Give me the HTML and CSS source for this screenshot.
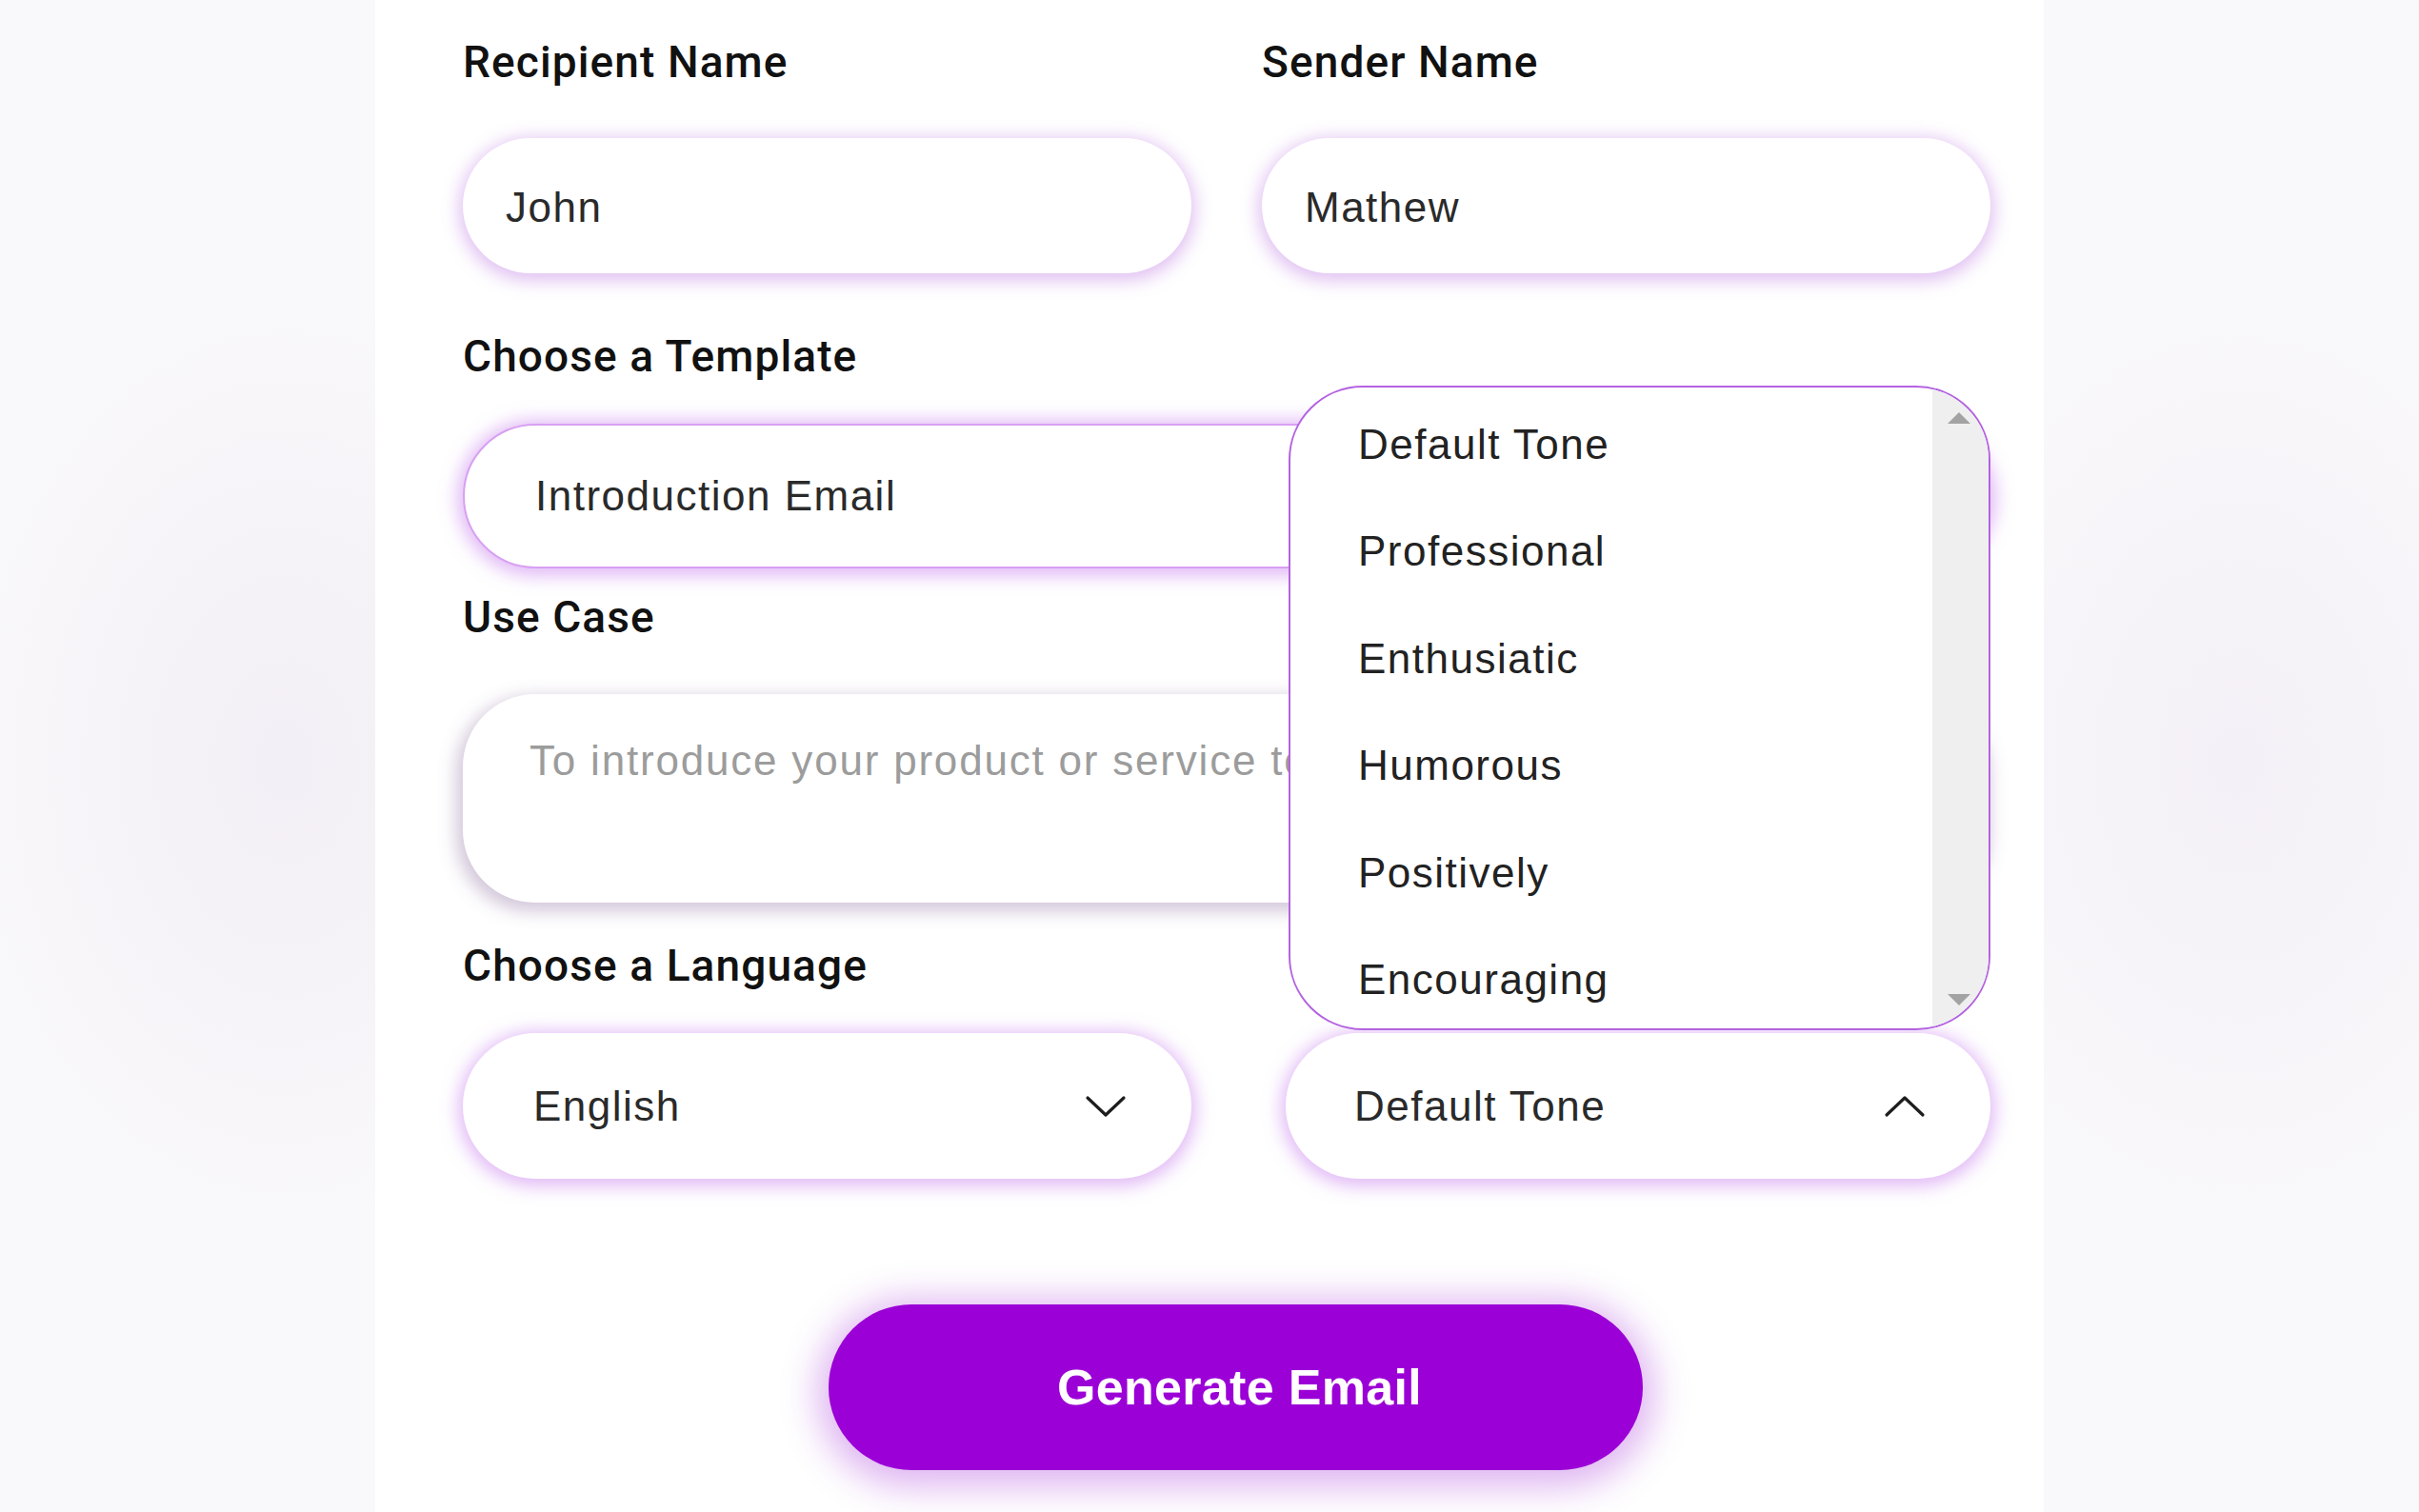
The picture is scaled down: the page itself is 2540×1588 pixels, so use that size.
FILE: index.html
```html
<!DOCTYPE html>
<html lang="en">
<head>
<meta charset="utf-8">
<title>Email Generator</title>
<link rel="stylesheet" href="styles.css">
</head>
<body>
<div class="page">
  <main class="card">
    <div class="row-two">
      <div class="field">
        <div class="label">Recipient Name</div>
        <div class="pill text-input">John</div>
      </div>
      <div class="field">
        <div class="label">Sender Name</div>
        <div class="pill text-input">Mathew</div>
      </div>
    </div>

    <div class="field field-template">
      <div class="label">Choose a Template</div>
      <div class="pill select template-select"><span>Introduction Email</span></div>
    </div>

    <div class="field field-usecase">
      <div class="label">Use Case</div>
      <div class="textarea"><span class="placeholder">To introduce your product or service to a potential customer</span></div>
    </div>

    <div class="row-lang">
      <div class="field">
        <div class="label">Choose a Language</div>
        <div class="pill select lang-select">
          <span>English</span>
          <svg class="chev" viewBox="0 0 44 24" width="44" height="24"><polyline points="3,3 22,21 41,3" fill="none" stroke="#1d1d1d" stroke-width="3.2" stroke-linecap="round" stroke-linejoin="round"/></svg>
        </div>
      </div>
      <div class="field tone-field">
        <div class="tone-wrap">
          <div class="pill select tone-select">
            <span>Default Tone</span>
            <svg class="chev" viewBox="0 0 44 24" width="44" height="24"><polyline points="3,21 22,3 41,21" fill="none" stroke="#1d1d1d" stroke-width="3.2" stroke-linecap="round" stroke-linejoin="round"/></svg>
          </div>
          <div class="dropdown">
            <ul class="options">
              <li>Default Tone</li>
              <li>Professional</li>
              <li>Enthusiatic</li>
              <li>Humorous</li>
              <li>Positively</li>
              <li>Encouraging</li>
            </ul>
            <div class="scrollbar">
              <span class="arrow-up"></span>
              <span class="arrow-down"></span>
            </div>
          </div>
        </div>
      </div>
    </div>

    <div class="actions">
      <button class="generate">Generate Email</button>
    </div>
  </main>
</div>
</body>
</html>
```

FILE: styles.css
```css
* { box-sizing: border-box; }

html, body {
  margin: 0;
  padding: 0;
}

body {
  width: 2540px;
  height: 1588px;
  overflow: hidden;
  background:
    radial-gradient(ellipse 500px 700px at 300px 800px, rgba(238, 232, 242, 0.6), rgba(248, 247, 249, 0) 70%),
    radial-gradient(ellipse 500px 700px at 2350px 800px, rgba(240, 234, 244, 0.6), rgba(248, 247, 249, 0) 70%),
    #f9f8fa;
  font-family: "Liberation Sans", Arial, sans-serif;
}

.page {
  display: flex;
  height: 1588px;
}

.card {
  margin-left: 394px;
  width: 1752px;
  height: 1588px;
  background: #ffffff;
  padding: 37px 56px 0 92px;
  display: flex;
  flex-direction: column;
}

.label {
  font-family: Roboto, "Liberation Sans", sans-serif;
  font-weight: 500;
  font-size: 46px;
  line-height: 56px;
  height: 56px;
  color: #111111;
  letter-spacing: 1.1px;
  white-space: nowrap;
}

.field {
  display: flex;
  flex-direction: column;
}

.row-two {
  display: grid;
  grid-template-columns: 765px 765px;
  column-gap: 74px;
}

.row-two .label { margin-bottom: 52px; }

.pill {
  border-radius: 80px;
  background: #ffffff;
  font-size: 44px;
  letter-spacing: 1.5px;
  color: #2a2a2a;
  display: flex;
  align-items: center;
  white-space: nowrap;
}

.text-input {
  height: 142px;
  padding-left: 45px;
  padding-top: 4px;
  box-shadow: 0 4px 18px 4px rgba(192, 125, 228, 0.48);
}

.field-template { margin-top: 59px; }
.field-template .label { margin-bottom: 43px; }

.select {
  padding-left: 74px;
  padding-right: 68px;
  justify-content: space-between;
}

.template-select {
  height: 152px;
  border: 2px solid #d8a0f2;
  box-shadow: 0 2px 18px 6px rgba(200, 125, 238, 0.52);
}

.field-usecase { margin-top: 23px; }
.field-usecase .label { margin-bottom: 53px; }

.textarea {
  height: 219px;
  border-radius: 76px;
  background: #ffffff;
  padding: 42px 0 0 70px;
  font-size: 44px;
  letter-spacing: 1.8px;
  line-height: 56px;
  white-space: nowrap;
  box-shadow: -4px 6px 18px 3px rgba(150, 122, 168, 0.42);
}

.placeholder {
  display: block;
  width: 797px;
  overflow: hidden;
  color: #9c9c9c;
}

.row-lang {
  margin-top: 38px;
  display: grid;
  grid-template-columns: 765px 765px;
  column-gap: 74px;
}

.row-lang .label { margin-bottom: 43px; }

.tone-field {
  justify-content: flex-end;
}

.tone-wrap {
  position: relative;
  margin-left: 25px;
}

.lang-select,
.tone-select {
  height: 153px;
  box-shadow: 0 3px 18px 5px rgba(200, 125, 238, 0.52);
}

.tone-select {
  padding-left: 72px;
}

.chev {
  display: block;
  width: 44px;
  height: 24px;
}

.dropdown {
  position: absolute;
  left: 3px;
  right: 0;
  bottom: calc(100% + 3px);
  height: 677px;
  background: #ffffff;
  border: 2.5px solid #b363e0;
  border-radius: 78px;
  overflow: hidden;
  display: flex;
}

.options {
  list-style: none;
  margin: 0;
  padding: 4px 0 0 71px;
  flex: 1;
}

.options li {
  height: 112.4px;
  line-height: 112.4px;
  font-size: 44px;
  letter-spacing: 1.5px;
  color: #222222;
  white-space: nowrap;
}

.scrollbar {
  width: 59px;
  background: #efefef;
  position: relative;
}

.arrow-up,
.arrow-down {
  position: absolute;
  left: 16px;
  width: 0;
  height: 0;
  border-left: 12px solid transparent;
  border-right: 12px solid transparent;
}

.arrow-up {
  top: 26px;
  border-bottom: 12px solid #a3a3a3;
}

.arrow-down {
  bottom: 24px;
  border-top: 12px solid #a3a3a3;
}

.actions {
  margin-top: 132px;
  display: flex;
  padding-left: 384px;
}

.generate {
  width: 855px;
  height: 174px;
  border: none;
  border-radius: 87px;
  background: #9b00d6;
  color: #ffffff;
  padding-left: 14px;
  font-family: "Liberation Sans", Arial, sans-serif;
  font-weight: 700;
  font-size: 52px;
  letter-spacing: 0.3px;
  box-shadow: 0 6px 36px 12px rgba(160, 40, 215, 0.34);
  cursor: pointer;
}
```
